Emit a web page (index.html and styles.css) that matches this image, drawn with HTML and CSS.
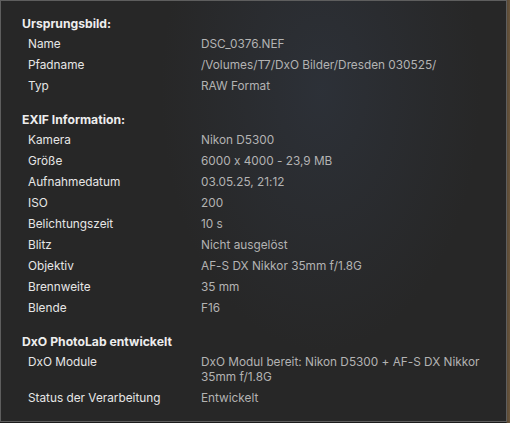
FILE: index.html
```html
<!DOCTYPE html>
<html lang="de">
<head>
<meta charset="utf-8">
<title>Info</title>
<link rel="stylesheet" href="styles.css">
</head>
<body>
<div class="panel">
  <section class="section">
    <h2 class="heading">Ursprungsbild:</h2>
    <div class="row"><span class="label">Name</span><span class="value">DSC_0376.NEF</span></div>
    <div class="row"><span class="label">Pfadname</span><span class="value">/Volumes/T7/DxO Bilder/Dresden 030525/</span></div>
    <div class="row"><span class="label">Typ</span><span class="value">RAW Format</span></div>
  </section>
  <section class="section">
    <h2 class="heading">EXIF Information:</h2>
    <div class="row"><span class="label">Kamera</span><span class="value">Nikon D5300</span></div>
    <div class="row"><span class="label">Größe</span><span class="value">6000 x 4000 - 23,9 MB</span></div>
    <div class="row"><span class="label">Aufnahmedatum</span><span class="value">03.05.25, 21:12</span></div>
    <div class="row"><span class="label">ISO</span><span class="value">200</span></div>
    <div class="row"><span class="label">Belichtungszeit</span><span class="value">10 s</span></div>
    <div class="row"><span class="label">Blitz</span><span class="value">Nicht ausgelöst</span></div>
    <div class="row"><span class="label">Objektiv</span><span class="value">AF-S DX Nikkor 35mm f/1.8G</span></div>
    <div class="row"><span class="label">Brennweite</span><span class="value">35 mm</span></div>
    <div class="row"><span class="label">Blende</span><span class="value">F16</span></div>
  </section>
  <section class="section">
    <h2 class="heading">DxO PhotoLab entwickelt</h2>
    <div class="row"><span class="label">DxO Module</span><span class="value">DxO Modul bereit: Nikon D5300 + AF-S DX Nikkor 35mm f/1.8G</span></div>
    <div class="row"><span class="label">Status der Verarbeitung</span><span class="value">Entwickelt</span></div>
  </section>
</div>
</body>
</html>
```
FILE: styles.css
```css
html, body {
  margin: 0;
  padding: 0;
}
body {
  width: 510px;
  height: 423px;
  background: linear-gradient(90deg, #1b1b1b 0, #1b1b1b 506px, #5a4a36 507px, #6b563c 510px);
  font-family: Inter, "Liberation Sans", sans-serif;
  font-feature-settings: "calt" 0;
  overflow: hidden;
}
.panel {
  box-sizing: border-box;
  width: 507px;
  height: 422px;
  border: 1px solid #5e5e5e;
  background:
    radial-gradient(ellipse 160px 260px at 320px 90px, rgba(50, 58, 72, 0.5), rgba(40, 44, 52, 0) 100%),
    #272727;
  padding: 12px 0 0 21px;
}
.section + .section {
  margin-top: 12px;
}
.heading {
  margin: 0;
  font-size: 12.2px;
  font-weight: 700;
  color: #ededed;
  line-height: 21px;
}
.row {
  display: grid;
  grid-template-columns: 173px 1fr;
  padding: 3px 0 3px 6px;
  font-size: 11.8px;
  line-height: 15px;
}
.label {
  color: #e6e6e6;
}
.value {
  color: #b3b3b3;
  padding-right: 18px;
}
```
